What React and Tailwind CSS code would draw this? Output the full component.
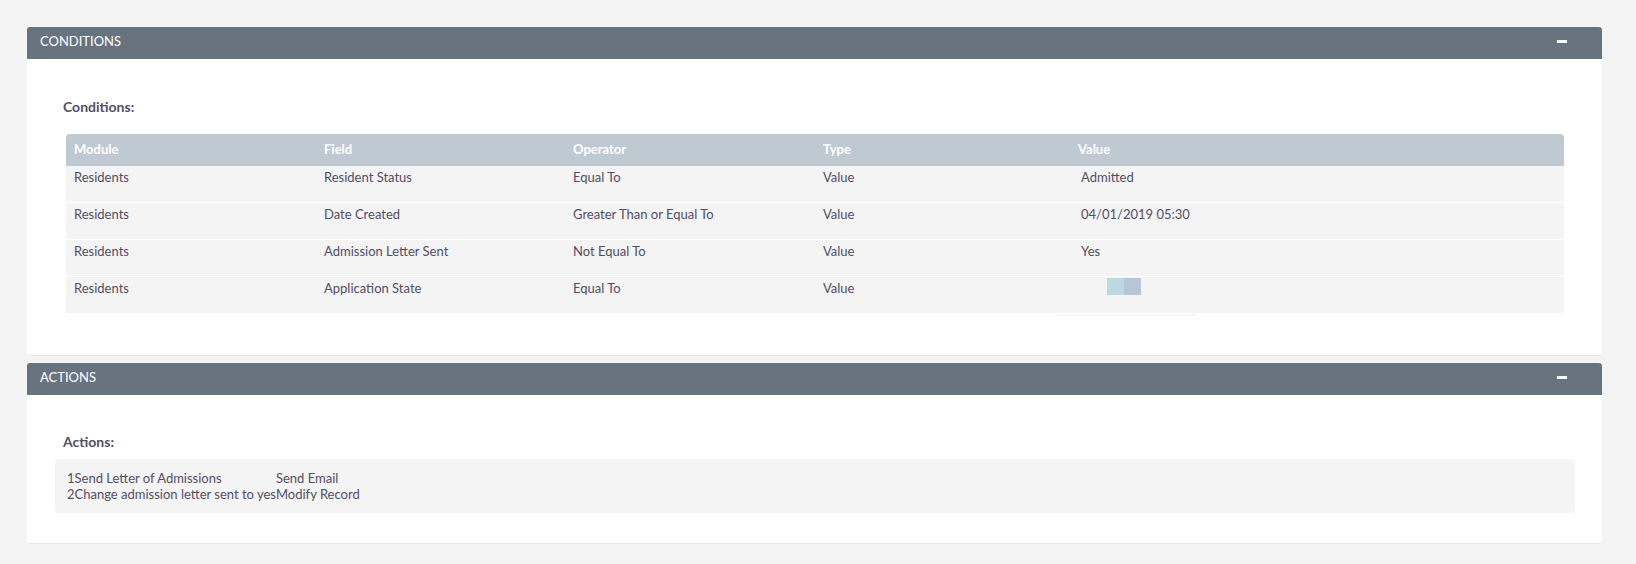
import React from 'react';

const conditions = [
    { module: 'Residents', field: 'Resident Status', operator: 'Equal To', type: 'Value', value: 'Admitted' },
    { module: 'Residents', field: 'Date Created', operator: 'Greater Than or Equal To', type: 'Value', value: '04/01/2019 05:30' },
    { module: 'Residents', field: 'Admission Letter Sent', operator: 'Not Equal To', type: 'Value', value: 'Yes' },
    { module: 'Residents', field: 'Application State', operator: 'Equal To', type: 'Value', value: null },
];

const actions = [
    { name: '1Send Letter of Admissions', type: 'Send Email' },
    { name: '2Change admission letter sent to yes', type: 'Modify Record' },
];

const PanelHeader = ({ title }) => (
    <div className="h-[32px] bg-[#67737f] rounded-t-[3px] flex items-center justify-between pl-[13px] pr-[35px] pb-[3px] text-white text-[13px] uppercase">
        <span>{title}</span>
        <span className="block w-[10px] h-[3px] bg-white"></span>
    </div>
);

const App = () => {
    const cols = 'grid grid-cols-[250px_249px_250px_255px_1fr]';

    return (
        <div className="min-h-screen bg-[#f4f4f4] pt-[27px] pl-[27px] pr-[34px] pb-[20px] font-['Lato','Open_Sans',sans-serif] text-[#534d64]">
            {/* Conditions panel */}
            <div className="bg-white rounded-[3px] border-b border-[#e6e6e6]">
                <PanelHeader title="Conditions" />
                <div className="pl-[36px] pr-[38px] pt-[40px] pb-[41px]">
                    <p className="text-[14px] font-bold leading-[16px]">Conditions:</p>
                    <div className="ml-[3px] mt-[19px] rounded-t-[4px]">
                        <div className={`${cols} h-[32px] items-center bg-[#bfc9d1] rounded-t-[4px] text-white text-[13px] font-bold`}>
                            <div className="pl-[8px]">Module</div>
                            <div className="pl-[8px]">Field</div>
                            <div className="pl-[8px]">Operator</div>
                            <div className="pl-[8px]">Type</div>
                            <div className="pl-[8px]">Value</div>
                        </div>
                        {conditions.map((row, i) => (
                            <div key={i} className={`${cols} h-[37px] bg-[#f4f4f4] border-b border-white text-[13px] leading-[16px] pt-[3px]`}>
                                <div className="pl-[8px]">{row.module}</div>
                                <div className="pl-[8px]">{row.field}</div>
                                <div className="pl-[8px]">{row.operator}</div>
                                <div className="pl-[8px]">{row.type}</div>
                                {row.value ? (
                                    <div className="pl-[11px]">{row.value}</div>
                                ) : (
                                    <div className="relative pl-[37px] -mt-[3px] pt-[1px]">
                                        <div className="flex">
                                            <span className="block w-[17px] h-[17px] bg-[#bcd9e1]"></span>
                                            <span className="block w-[17px] h-[17px] bg-[#b6c6d6]"></span>
                                        </div>
                                        <div className="absolute left-[-14px] top-[37px] w-[140px] h-[2px] bg-[#f4f4f4]"></div>
                                    </div>
                                )}
                            </div>
                        ))}
                    </div>
                </div>
            </div>

            {/* Actions panel */}
            <div className="mt-[7px] bg-white rounded-[3px] border-b border-[#e6e6e6]">
                <PanelHeader title="Actions" />
                <div className="pl-[28px] pr-[27px] pt-[39px] pb-[30px]">
                    <p className="ml-[8px] text-[14px] font-bold leading-[16px]">Actions:</p>
                    <div className="mt-[9px] bg-[#f4f4f4] rounded-[4px] pl-[12px] py-[11px] text-[13px] leading-[16px]">
                        <div className="grid grid-cols-[auto_auto] justify-start">
                            {actions.map((a, i) => (
                                <React.Fragment key={i}>
                                    <div>{a.name}</div>
                                    <div>{a.type}</div>
                                </React.Fragment>
                            ))}
                        </div>
                    </div>
                </div>
            </div>
        </div>
    );
};

export default App;
